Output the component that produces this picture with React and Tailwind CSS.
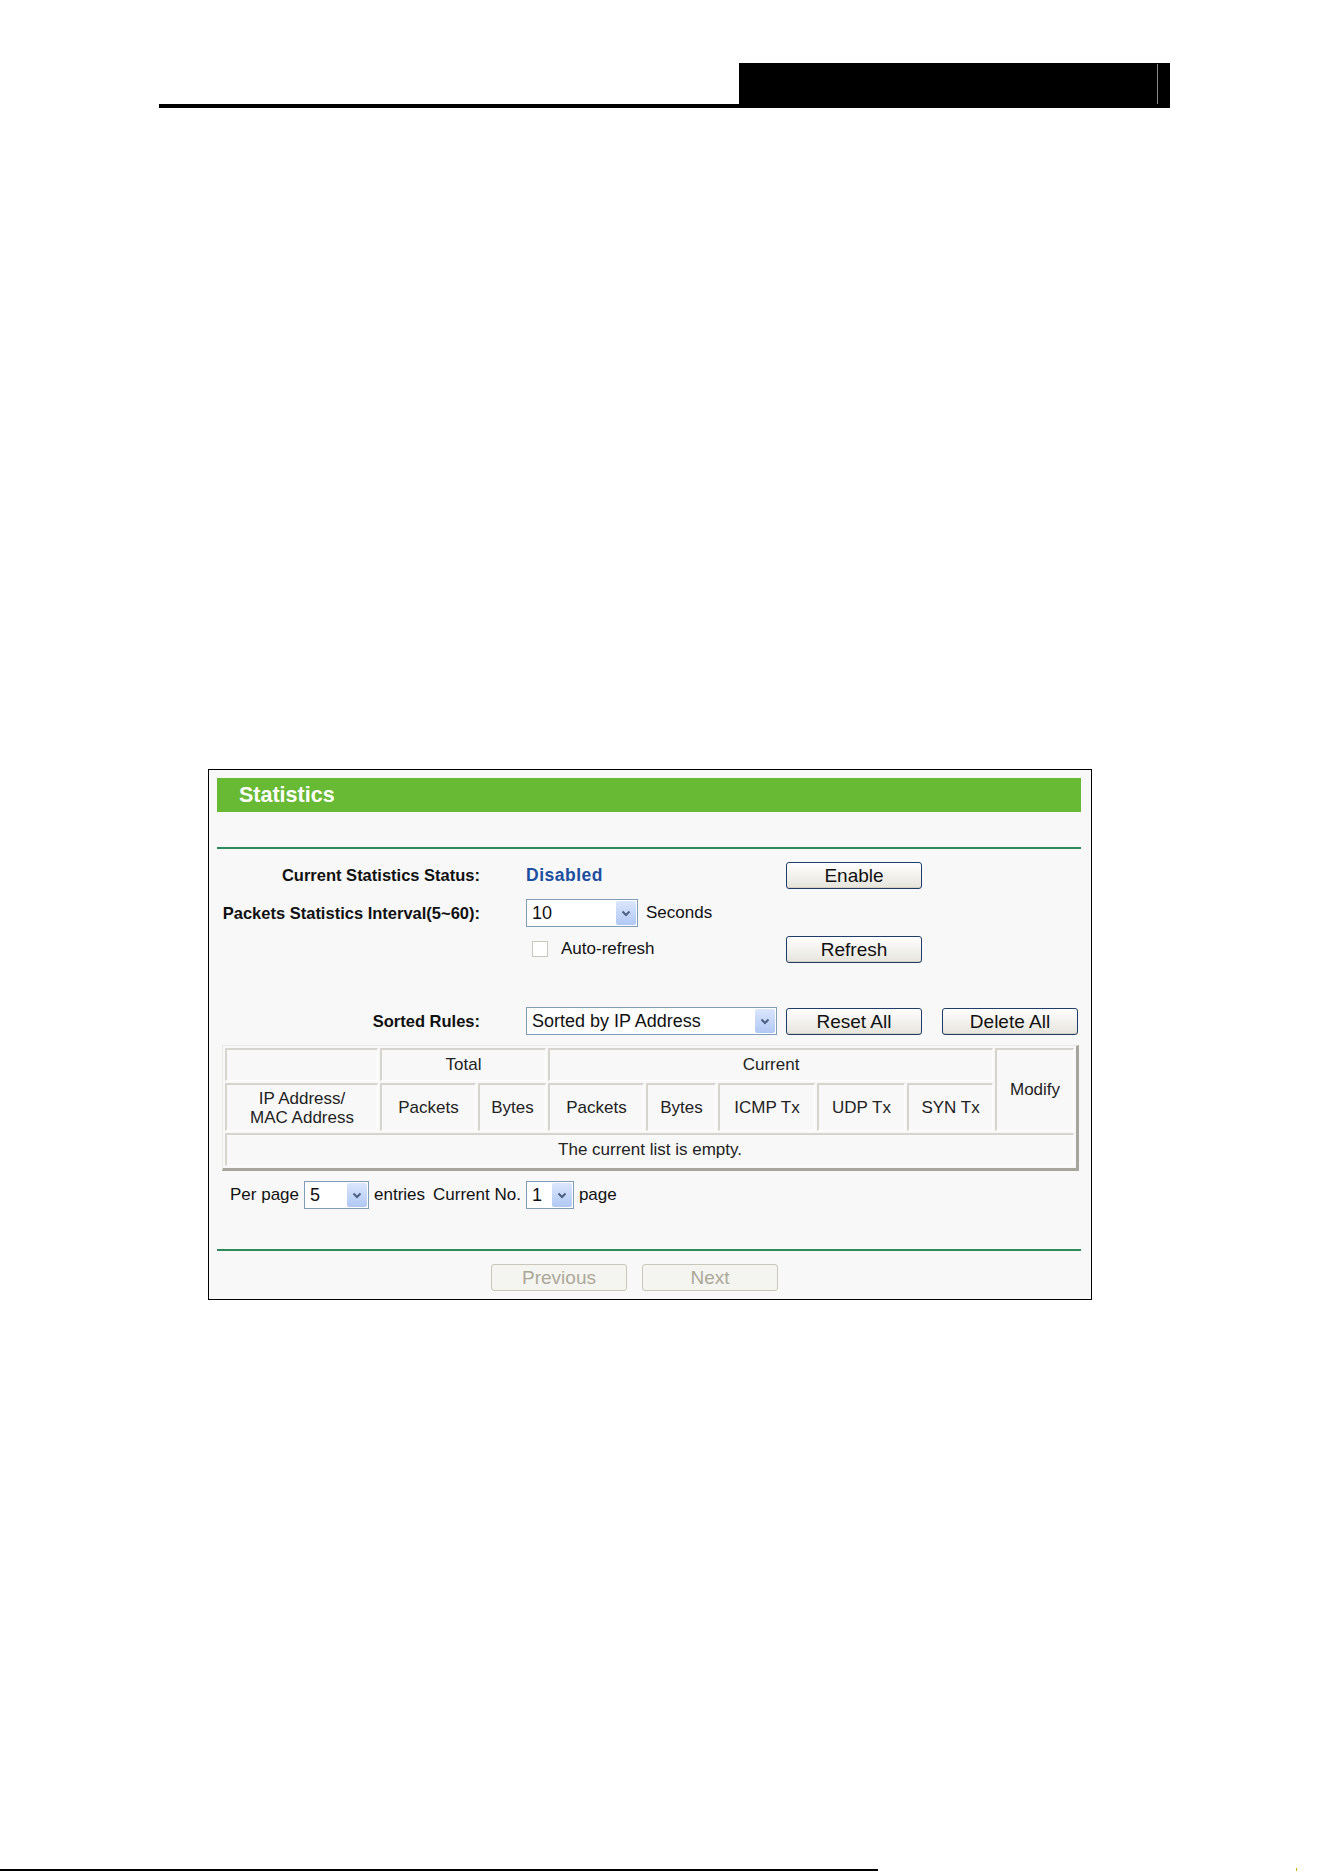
import React from "react";

function Chevron() {
  return (
    <svg width="10" height="7" viewBox="0 0 10 7" className="block">
      <path d="M1.5 1.5 L5 5 L8.5 1.5" fill="none" stroke="#4d6185" strokeWidth="2" />
    </svg>
  );
}

function Select({ value, width }) {
  return (
    <div
      className="flex items-stretch h-[28px] border border-[#7f9db9] bg-white"
      style={{ width }}
    >
      <span className="flex-1 flex items-center pl-[5px] text-[18px] text-[#111]">{value}</span>
      <span className="w-[20px] my-[1px] mr-[1px] flex items-center justify-center bg-gradient-to-b from-[#dbe6fd] to-[#b1c8f4] rounded-[2px]">
        <Chevron />
      </span>
    </div>
  );
}

function Button({ children, disabled }) {
  return (
    <button
      className={
        disabled
          ? "w-[136px] h-[27px] rounded-[3px] border border-[#c9c7ba] bg-[#f4f4f0] text-[19px] text-[#aca899] leading-none"
          : "w-[136px] h-[27px] rounded-[3px] border border-[#1e3d6b] bg-gradient-to-b from-white to-[#e6e4dc] text-[19px] text-[#111] leading-none shadow-[inset_0_-1px_0_#d6d0c0]"
      }
    >
      {children}
    </button>
  );
}

const cell = "border-t-2 border-l-2 border-[#d6d4cc] border-r border-b border-r-white border-b-white text-center text-[17px] text-[#222] font-normal";

export default function App() {
  return (
    <div className="w-[1324px] h-[1872px] bg-white flex flex-col font-['Liberation_Sans',Arial,sans-serif]">
      {/* page header */}
      <div className="mt-[63px] ml-[159px] w-[1011px] h-[45px] flex items-end">
        <div className="flex-1 h-[4px] bg-black" />
        <div className="w-[431px] h-[45px] bg-black flex justify-end">
          <div className="w-px h-[40px] mt-px mr-[12px] bg-[#8a8a8a]" />
        </div>
      </div>

      {/* statistics panel */}
      <div className="mt-[661px] ml-[208px] w-[884px] h-[531px] border border-black bg-[#f8f8f8] pt-[8px] pl-[8px] flex flex-col">
        <div className="w-[864px] h-[34px] bg-[#68b934] flex items-center pl-[22px]">
          <span className="text-white font-bold text-[21.5px]">Statistics</span>
        </div>
        <div className="w-[864px] h-[2px] mt-[35px] bg-[#2f8a5a]" />

        <div className="flex flex-col text-[17px] text-[#111]">
          <div className="mt-[11px] h-[30px] flex items-center">
            <span className="w-[263px] text-right font-bold text-[16.5px] whitespace-nowrap">Current Statistics Status:</span>
            <span className="w-[260px] ml-[46px] font-bold text-[17.5px] text-[#1d4ea0] tracking-[0.5px]">Disabled</span>
            <Button>Enable</Button>
          </div>
          <div className="mt-[8px] h-[30px] flex items-center">
            <span className="w-[263px] text-right font-bold text-[16.5px] whitespace-nowrap">Packets Statistics Interval(5~60):</span>
            <div className="ml-[46px] flex items-center">
              <Select value="10" width="112px" />
              <span className="ml-[8px]">Seconds</span>
            </div>
          </div>
          <div className="mt-[6px] h-[30px] flex items-center">
            <div className="w-[263px]" />
            <div className="w-[260px] ml-[46px] flex items-center">
              <span className="ml-[6px] w-[16px] h-[16px] border border-[#c8c8c0] bg-white" />
              <span className="ml-[13px]">Auto-refresh</span>
            </div>
            <Button>Refresh</Button>
          </div>
          <div className="mt-[42px] h-[30px] flex items-center">
            <span className="w-[263px] text-right font-bold text-[16.5px]">Sorted Rules:</span>
            <div className="ml-[46px] w-[251px]">
              <Select value="Sorted by IP Address" width="251px" />
            </div>
            <div className="ml-[9px] flex gap-[20px]">
              <Button>Reset All</Button>
              <Button>Delete All</Button>
            </div>
          </div>
        </div>

        {/* rules table */}
        <div className="mt-[9px] ml-[5px] w-[857px] border-t border-l border-[#e8e8e4] border-r-[3px] border-b-[3px] border-r-[#a8a69c] border-b-[#a8a69c]">
          <table className="w-full table-fixed border-separate border-spacing-[2px]">
            <colgroup>
              <col className="w-[153px]" />
              <col className="w-[96px]" />
              <col className="w-[68px]" />
              <col className="w-[96px]" />
              <col className="w-[70px]" />
              <col className="w-[97px]" />
              <col className="w-[88px]" />
              <col className="w-[86px]" />
              <col />
            </colgroup>
            <thead>
              <tr className="h-[33px]">
                <th className={cell}></th>
                <th className={cell} colSpan={2}>Total</th>
                <th className={cell} colSpan={5}>Current</th>
                <th className={cell} rowSpan={2}>Modify</th>
              </tr>
              <tr className="h-[48px]">
                <th className={cell + " leading-[19px]"}>IP Address/<br />MAC Address</th>
                <th className={cell}>Packets</th>
                <th className={cell}>Bytes</th>
                <th className={cell}>Packets</th>
                <th className={cell}>Bytes</th>
                <th className={cell}>ICMP Tx</th>
                <th className={cell}>UDP Tx</th>
                <th className={cell}>SYN Tx</th>
              </tr>
            </thead>
            <tbody>
              <tr className="h-[33px]">
                <td className={cell} colSpan={9}>The current list is empty.</td>
              </tr>
            </tbody>
          </table>
        </div>

        {/* paging */}
        <div className="mt-[11px] ml-[13px] h-[26px] flex items-center text-[17px] text-[#111]">
          <span>Per page</span>
          <div className="ml-[5px]"><Select value="5" width="65px" /></div>
          <span className="ml-[5px]">entries</span>
          <span className="ml-[8px]">Current No.</span>
          <div className="ml-[5px]"><Select value="1" width="48px" /></div>
          <span className="ml-[5px]">page</span>
        </div>

        <div className="w-[864px] h-[2px] mt-[41px] bg-[#2f8a5a]" />
        <div className="mt-[13px] flex gap-[15px] pl-[274px]">
          <Button disabled>Previous</Button>
          <Button disabled>Next</Button>
        </div>
      </div>

      {/* footer rule */}
      <div className="mt-auto mb-[1px] flex items-end">
        <div className="w-[878px] h-[2px] bg-black" />
        <div className="ml-[418px] w-px h-[3px] bg-[#c8b400]" />
      </div>
    </div>
  );
}
